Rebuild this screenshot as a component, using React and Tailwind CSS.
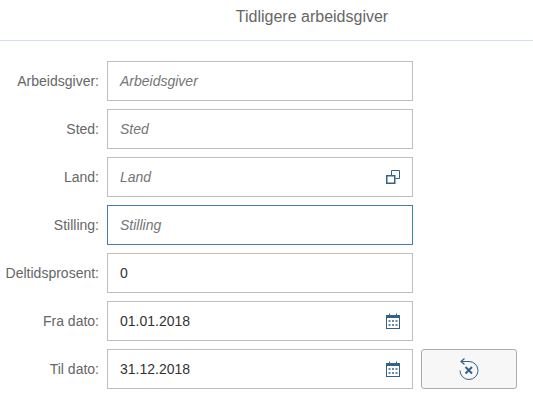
const CopyIcon = () => (
  <svg width="14" height="14" viewBox="0 0 14 14" fill="none" stroke="#346187">
    <path d="M5.5 5V0.5H13.5V8.5H9.5" />
    <rect x="0.75" y="5.75" width="8" height="7.5" strokeWidth="1.5" />
  </svg>
);

const CalendarIcon = () => (
  <svg width="14" height="16" viewBox="0 0 14 16" fill="none">
    <rect x="0.5" y="2.5" width="13" height="13" stroke="#346187" />
    <rect x="0" y="2" width="14" height="3" fill="#346187" />
    <path d="M3.5 0.5V3M10.5 0.5V3" stroke="#346187" />
    <path d="M2.5 7h2v2h-2zM6 7h2v2H6zM9.5 7h2v2h-2zM2.5 11h2v2h-2zM6 11h2v2H6zM9.5 11h2v2h-2z" fill="#6d8ba5" />
  </svg>
);

const ResetIcon = () => (
  <svg width="20" height="22" viewBox="0 0 20 22" fill="none" stroke="#346187">
    <path d="M2.5 3.5H10A9 9 0 1 1 1 12.5" />
    <path d="M5.5 0.5L2 3.5L5.5 6.5" strokeWidth="1.2" />
    <path d="M6.5 9L13 15.5M13 9L6.5 15.5" strokeWidth="2" />
  </svg>
);

const fields = [
  { label: 'Arbeidsgiver', placeholder: 'Arbeidsgiver' },
  { label: 'Sted', placeholder: 'Sted' },
  { label: 'Land', placeholder: 'Land', icon: <CopyIcon /> },
  { label: 'Stilling', placeholder: 'Stilling', focused: true },
  { label: 'Deltidsprosent', value: '0' },
  { label: 'Fra dato', value: '01.01.2018', icon: <CalendarIcon /> },
  { label: 'Til dato', value: '31.12.2018', icon: <CalendarIcon />, reset: true },
];

export default function App() {
  return (
    <div className="w-[533px] h-[404px] bg-white overflow-hidden font-['Liberation_Sans',Arial,sans-serif]">
      <header className="h-[41px] border-b border-[#d1e0ec] flex items-center justify-center pb-[6px] pl-[91px] text-[16px] text-[#666666]">
        <span>Tidligere arbeidsgiver</span>
      </header>

      <div className="flex flex-col gap-2 pt-5">
        {fields.map((f) => (
          <div key={f.label} className="flex items-center h-10">
            <label className="w-[99px] text-right text-[14px] text-[#666666]">{f.label}:</label>
            <div
              className={`ml-2 w-[306px] h-10 border flex items-center justify-between pl-3 pr-3 text-[14px] ${
                f.focused ? 'border-[#427cac]' : 'border-[#bfbfbf]'
              }`}
            >
              {f.value ? (
                <span className="text-[#333333]">{f.value}</span>
              ) : (
                <span className="italic text-[#757575]">{f.placeholder}</span>
              )}
              {f.icon && <span className="flex">{f.icon}</span>}
            </div>
            {f.reset && (
              <button className="ml-2 w-[96px] h-10 rounded-[3px] border border-[#ababab] bg-[#f7f7f7] flex items-center justify-center">
                <ResetIcon />
              </button>
            )}
          </div>
        ))}
      </div>
    </div>
  );
}
